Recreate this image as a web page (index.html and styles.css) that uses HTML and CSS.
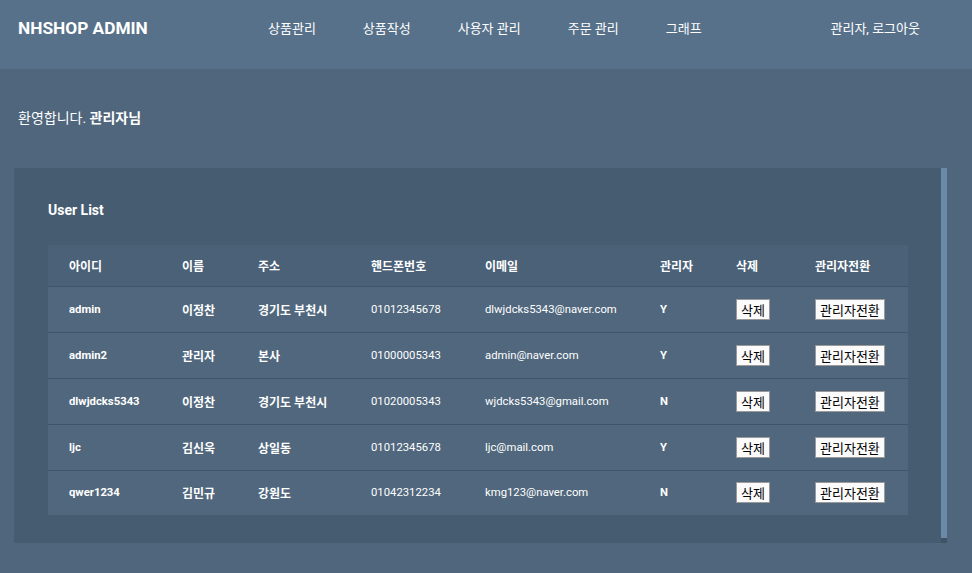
FILE: index.html
```html
<!DOCTYPE html>
<html lang="ko">
<head>
<meta charset="utf-8">
<title>NHSHOP ADMIN</title>
<link rel="stylesheet" href="styles.css">
</head>
<body>
<header class="topbar">
  <div class="logo">NHSHOP ADMIN</div>
  <nav class="nav">
    <a href="#">상품관리</a>
    <a href="#">상품작성</a>
    <a href="#">사용자 관리</a>
    <a href="#">주문 관리</a>
    <a href="#">그래프</a>
  </nav>
  <div class="account">관리자, 로그아웃</div>
</header>
<main>
  <p class="welcome">환영합니다. <b>관리자님</b></p>
  <section class="card">
    <h2 class="card-title">User List</h2>
    <table class="users">
      <colgroup>
        <col class="c1"><col class="c2"><col class="c3"><col class="c4"><col class="c5"><col class="c6"><col class="c7"><col class="c8">
      </colgroup>
      <thead>
        <tr><th>아이디</th><th>이름</th><th>주소</th><th>핸드폰번호</th><th>이메일</th><th>관리자</th><th>삭제</th><th>관리자전환</th></tr>
      </thead>
      <tbody>
        <tr><td class="id">admin</td><td class="ko">이정찬</td><td class="ko">경기도 부천시</td><td>01012345678</td><td>dlwjdcks5343@naver.com</td><td class="yn">Y</td><td><button class="btn">삭제</button></td><td><button class="btn">관리자전환</button></td></tr>
        <tr><td class="id">admin2</td><td class="ko">관리자</td><td class="ko">본사</td><td>01000005343</td><td>admin@naver.com</td><td class="yn">Y</td><td><button class="btn">삭제</button></td><td><button class="btn">관리자전환</button></td></tr>
        <tr><td class="id">dlwjdcks5343</td><td class="ko">이정찬</td><td class="ko">경기도 부천시</td><td>01020005343</td><td>wjdcks5343@gmail.com</td><td class="yn">N</td><td><button class="btn">삭제</button></td><td><button class="btn">관리자전환</button></td></tr>
        <tr><td class="id">ljc</td><td class="ko">김신욱</td><td class="ko">상일동</td><td>01012345678</td><td>ljc@mail.com</td><td class="yn">Y</td><td><button class="btn">삭제</button></td><td><button class="btn">관리자전환</button></td></tr>
        <tr><td class="id">qwer1234</td><td class="ko">김민규</td><td class="ko">강원도</td><td>01042312234</td><td>kmg123@naver.com</td><td class="yn">N</td><td><button class="btn">삭제</button></td><td><button class="btn">관리자전환</button></td></tr>
      </tbody>
    </table>
  </section>
</main>
</body>
</html>
```
FILE: styles.css
```css
* { box-sizing: border-box; }
html, body { margin: 0; padding: 0; }
body {
  background: #4f667c;
  color: #fff;
  font-family: Roboto, "Noto Sans CJK KR", sans-serif;
  width: 972px;
  height: 573px;
  overflow: hidden;
}
.topbar {
  height: 69px;
  background: #57718a;
  display: flex;
  align-items: center;
  padding: 0 0 14px 18px;
}
.logo {
  font-weight: 700;
  font-size: 17.3px;
  width: 250px;
}
.nav {
  display: flex;
  gap: 47px;
}
.nav a {
  color: #fff;
  text-decoration: none;
  font-size: 13px;
}
.account {
  margin-left: auto;
  margin-right: 52px;
  font-size: 13px;
}
main { display: block; }
.welcome {
  margin: 0;
  padding: 39px 18px 40px;
  line-height: 20px;
  font-size: 14px;
}
.welcome b { font-weight: 700; }
.card {
  position: relative;
  margin: 0 25px 0 14px;
  background: #465c71;
  border-right: 6px solid #6b8aa8;
  padding: 32px 33px 28px 34px;
}
.card::after {
  content: "";
  position: absolute;
  right: -6px;
  bottom: 0;
  width: 6px;
  height: 5px;
  background: #3f5367;
}
.card-title {
  margin: 0 0 25px;
  font-size: 14px;
  line-height: 20px;
  font-weight: 700;
}
.users {
  width: 860px;
  border-collapse: collapse;
  table-layout: fixed;
  font-size: 11.3px;
}
.c1 { width: 113px; }
.c2 { width: 76px; }
.c3 { width: 113px; }
.c4 { width: 114px; }
.c5 { width: 175px; }
.c6 { width: 76px; }
.c7 { width: 79px; }
.c8 { width: 114px; }
.users th {
  background: #4a6178;
  height: 41px;
  text-align: left;
  font-weight: 700;
  font-size: 12px;
  padding: 0 0 0 21px;
  border-bottom: 1px solid #40556a;
}
.users td {
  background: #50677d;
  height: 46px;
  padding: 0 0 0 21px;
  border-bottom: 1px solid #40556a;
  font-weight: 400;
  white-space: nowrap;
}
.users tbody tr:last-child td { border-bottom: 0; height: 45px; }
.users td.id { font-weight: 700; }
.users td.ko { font-weight: 700; font-size: 12px; }
.users td.yn { font-weight: 700; }
.btn {
  font-family: "Noto Sans CJK KR", sans-serif;
  font-size: 13px;
  line-height: 19px;
  height: 21px;
  padding: 0 4px;
  background: #fbfbfb;
  color: #000;
  border: 1px solid #9a9a9a;
  border-radius: 0;
  vertical-align: middle;
}
```
